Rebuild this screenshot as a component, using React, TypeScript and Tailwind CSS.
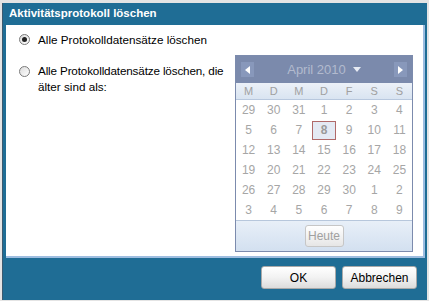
import React from "react";

const weekDays = ["M", "D", "M", "D", "F", "S", "S"];

const weeks: number[][] = [
  [29, 30, 31, 1, 2, 3, 4],
  [5, 6, 7, 8, 9, 10, 11],
  [12, 13, 14, 15, 16, 17, 18],
  [19, 20, 21, 22, 23, 24, 25],
  [26, 27, 28, 29, 30, 1, 2],
  [3, 4, 5, 6, 7, 8, 9],
];

const font = { fontFamily: '"Liberation Sans", Arial, sans-serif' };

const Radio: React.FC<{ checked?: boolean }> = ({ checked }) => (
  <span className="flex h-[11px] w-[11px] shrink-0 items-center justify-center rounded-full border border-[#7a7a7a] bg-gradient-to-br from-[#dcdcdc] to-white">
    {checked && <span className="h-[5px] w-[5px] rounded-full bg-[#222]" />}
  </span>
);

const Calendar: React.FC = () => (
  <div className="absolute left-[229px] top-[30px] w-[178px] border border-[#7c8bad] bg-white">
    <div className="flex h-[27px] items-center justify-between bg-[#7b8aac] px-[5px]">
      <span className="flex h-[15px] w-[13px] items-center justify-center bg-[#8898bb]">
        <svg width="6" height="8" viewBox="0 0 6 8">
          <path d="M5 0 L0 4 L5 8 Z" fill="#fff" />
        </svg>
      </span>
      <span className="flex items-center gap-[7px] text-[13px] text-[#b2bace]">
        April 2010
        <svg width="8" height="5" viewBox="0 0 8 5">
          <path d="M0 0 L8 0 L4 5 Z" fill="#e8ecf4" />
        </svg>
      </span>
      <span className="flex h-[15px] w-[13px] items-center justify-center bg-[#8898bb]">
        <svg width="6" height="8" viewBox="0 0 6 8">
          <path d="M1 0 L6 4 L1 8 Z" fill="#fff" />
        </svg>
      </span>
    </div>
    <div className="grid h-[17px] grid-cols-7 border-b border-[#b8c8de] bg-gradient-to-b from-[#ecf1f8] to-[#d9e4f1] text-[11px] text-[#a0a0a0]">
      {weekDays.map((d, i) => (
        <span key={i} className="flex items-center justify-center">
          {d}
        </span>
      ))}
    </div>
    <div className="grid grid-cols-7 text-[12px] text-[#a6a6a6]">
      {weeks.flat().map((d, i) => (
        <span key={i} className="flex h-[20px] items-center justify-center">
          {i === 10 ? (
            <span className="flex h-[19px] w-[24px] items-center justify-center border border-[#b06a6a] bg-[#e4eaf4] font-bold text-[#9a9a9a]">
              {d}
            </span>
          ) : (
            d
          )}
        </span>
      ))}
    </div>
    <div className="flex h-[31px] items-center justify-center border-t border-[#b7c7dc] bg-gradient-to-b from-[#e8eff8] to-[#d3e0f0]">
      <span className="flex h-[22px] w-[39px] items-center justify-center rounded-[3px] border border-[#c6c6c6] bg-gradient-to-b from-white to-[#e6e6e6] text-[12px] text-[#a0a0a0]">
        Heute
      </span>
    </div>
  </div>
);

const Button: React.FC<{ children: React.ReactNode }> = ({ children }) => (
  <span className="flex h-[23px] w-[75px] items-center justify-center rounded-[3px] border border-[#a9a9a9] bg-gradient-to-b from-white via-[#f2f2f2] to-[#dcdcdc] text-[12px] text-black">
    {children}
  </span>
);

export default function App() {
  return (
    <div
      className="flex h-[301px] w-[429px] bg-[#e4e4e4] pb-[1px] pl-[2px] pr-[2px] pt-[3px]"
      style={font}
    >
      <div className="flex flex-1 flex-col border-l border-[#3b5a70] bg-[#1f6d95]">
        <div className="flex h-[22px] items-center px-[6px] text-[11.5px] font-bold text-white">
          Aktivitätsprotokoll löschen
        </div>
        <div className="relative ml-[3px] mr-[2px] h-[233px] border-b-2 border-r-2 border-[#9dbde0] bg-white text-[11.7px] text-black">
          <div className="flex flex-col gap-[14px] pl-[13px] pt-[6px]">
            <label className="flex items-center gap-[8px]">
              <Radio checked />
              <span>Alle Protokolldatensätze löschen</span>
            </label>
            <label className="flex items-start gap-[8px]">
              <span className="pt-[3px]">
                <Radio />
              </span>
              <span className="whitespace-nowrap leading-[16px]">
                <span className="tracking-[-0.15px]">Alle Protokolldatensätze löschen, die</span>
                <br />
                älter sind als:
              </span>
            </label>
          </div>
          <Calendar />
        </div>
        <div className="flex justify-end gap-[6px] pr-[10px] pt-[8px]">
          <Button>OK</Button>
          <Button>Abbrechen</Button>
        </div>
      </div>
    </div>
  );
}
